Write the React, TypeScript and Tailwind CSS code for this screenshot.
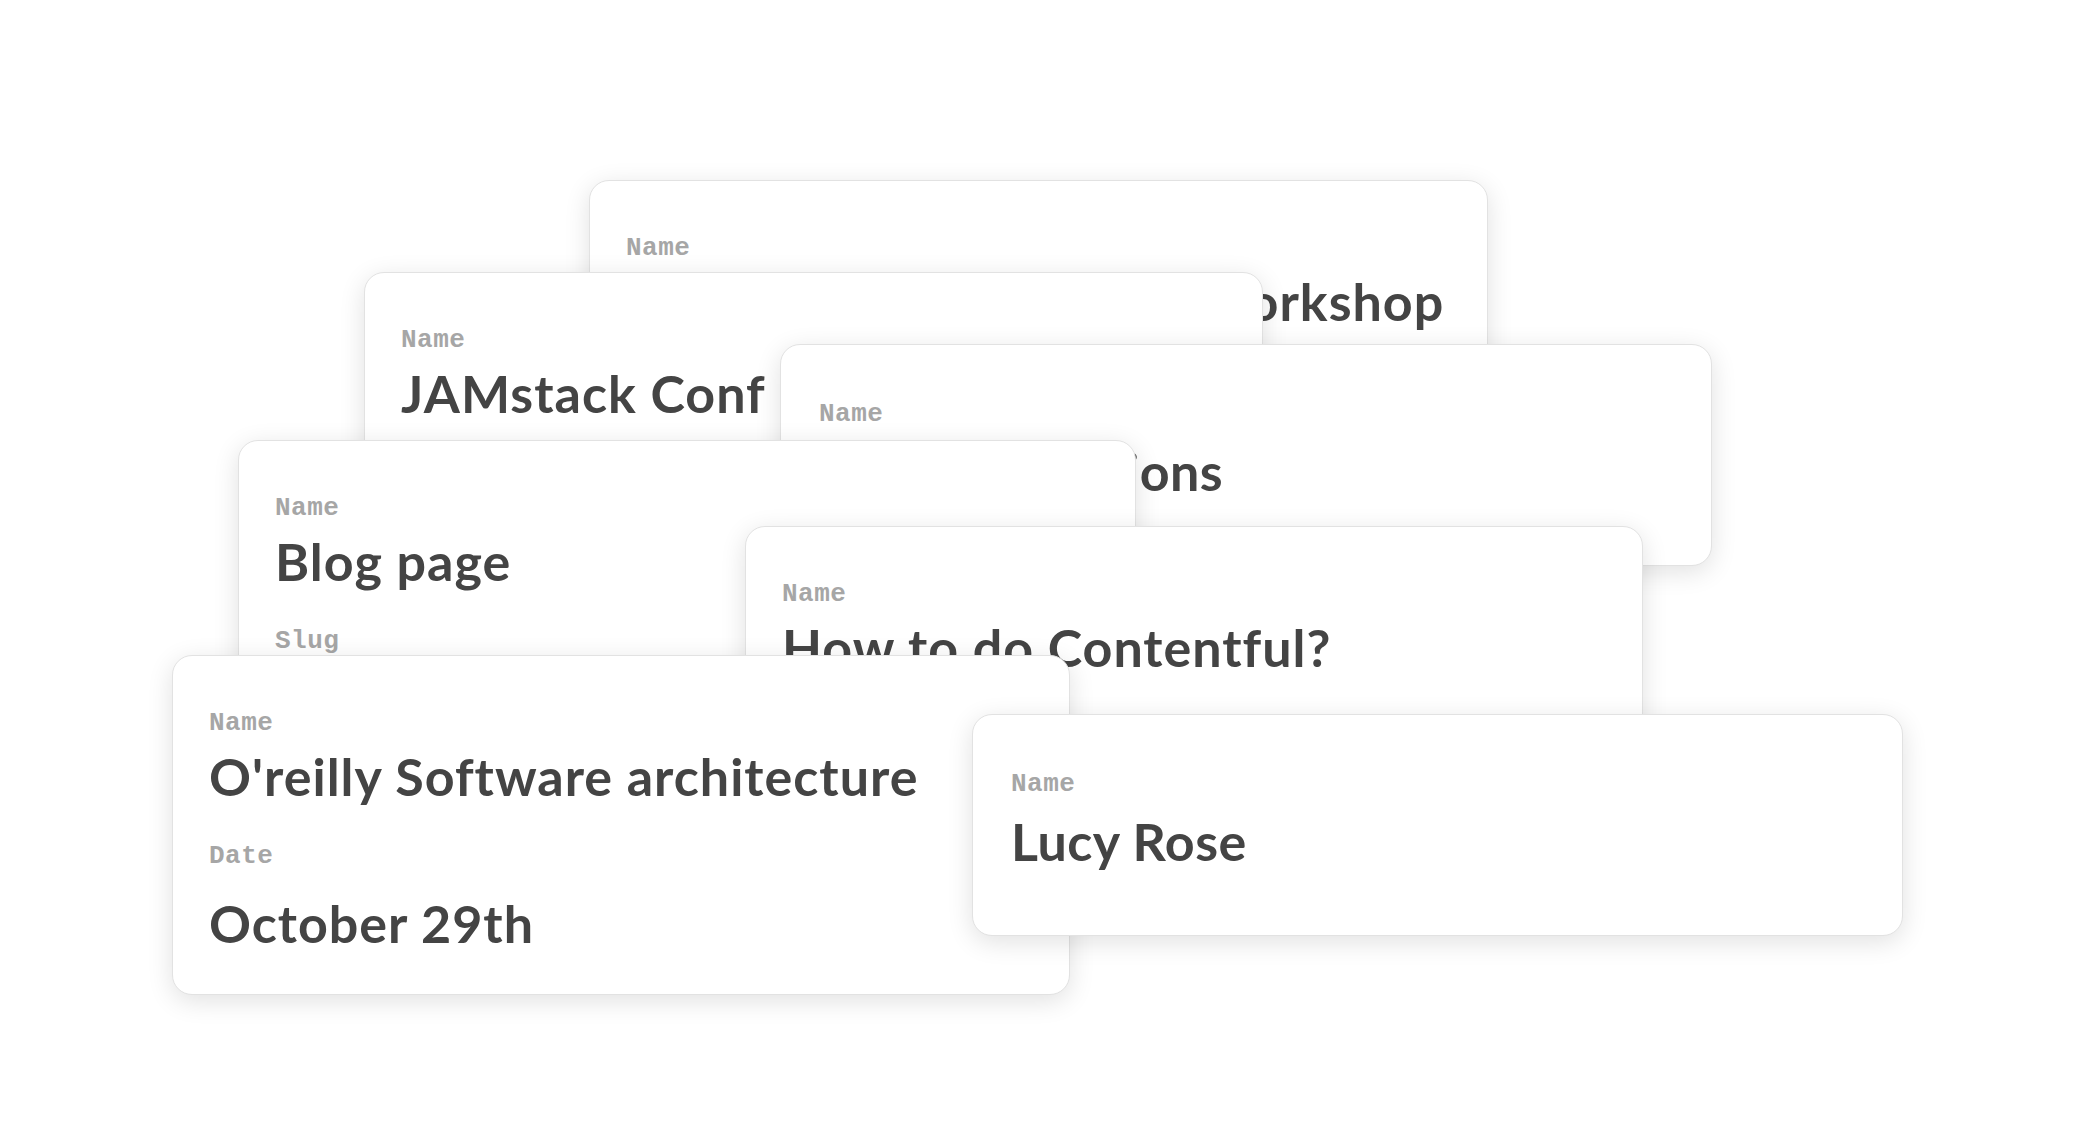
import React from 'react';

type Field = { label: string; value?: string; valueClass?: string };

interface CardProps {
  pos: string;
  big?: boolean;
  fields: Field[];
}

const Card: React.FC<CardProps> = ({ pos, big, fields }) => {
  const label = big
    ? 'font-["Liberation_Mono",monospace] font-bold text-[26px] leading-[26px] text-[#a6a6a6] tracking-[0.5px]'
    : 'font-["Liberation_Mono",monospace] font-bold text-[26px] leading-[24px] text-[#a6a6a6] tracking-[0.5px]';
  const value = big
    ? 'font-["Lato",sans-serif] font-bold text-[52px] leading-[62px] text-[#444444] tracking-[0.5px]'
    : 'font-["Lato",sans-serif] font-bold text-[52px] leading-[60px] text-[#444444] tracking-[1px]';

  return (
    <div
      className={`absolute ${pos} bg-white rounded-[20px] border border-[#e2e2e2] shadow-[0_6px_26px_rgba(0,0,0,0.12)] overflow-hidden`}
    >
      <div className={big ? 'pt-[56px] pl-[38px] flex flex-col' : 'pt-[55px] pl-[36px] flex flex-col'}>
        {fields.map((f, i) => (
          <div key={i} className={i === 0 ? 'flex flex-col' : 'flex flex-col mt-[38px]'}>
            <span className={label}>{f.label}</span>
            {f.value && (
              <span className={`${value} whitespace-nowrap ${f.valueClass ?? (big ? 'mt-[13px]' : 'mt-[11px]')}`}>
                {f.value}
              </span>
            )}
          </div>
        ))}
      </div>
    </div>
  );
};

export default function App() {
  return (
    <div className="relative w-full h-[1138px] bg-white overflow-hidden">
      <Card
        pos="left-[589px] top-[180px] w-[899px] h-[260px]"
        fields={[{ label: 'Name', value: "Contentful Developer's Workshop" }]}
      />
      <Card
        pos="left-[364px] top-[272px] w-[899px] h-[222px]"
        fields={[{ label: 'Name', value: 'JAMstack Conf' }]}
      />
      <Card
        big
        pos="left-[780px] top-[344px] w-[932px] h-[222px]"
        fields={[{ label: 'Name', value: 'Team discussions' }]}
      />
      <Card
        pos="left-[238px] top-[440px] w-[898px] h-[300px]"
        fields={[
          { label: 'Name', value: 'Blog page' },
          { label: 'Slug', value: 'blog-page' },
        ]}
      />
      <Card
        pos="left-[745px] top-[526px] w-[898px] h-[260px]"
        fields={[{ label: 'Name', value: 'How to do Contentful?' }]}
      />
      <Card
        pos="left-[172px] top-[655px] w-[898px] h-[340px]"
        fields={[
          { label: 'Name', value: "O'reilly Software architecture" },
          { label: 'Date', value: 'October 29th', valueClass: 'mt-[25px]' },
        ]}
      />
      <Card
        big
        pos="left-[972px] top-[714px] w-[931px] h-[222px]"
        fields={[{ label: 'Name', value: 'Lucy Rose' }]}
      />
    </div>
  );
}
